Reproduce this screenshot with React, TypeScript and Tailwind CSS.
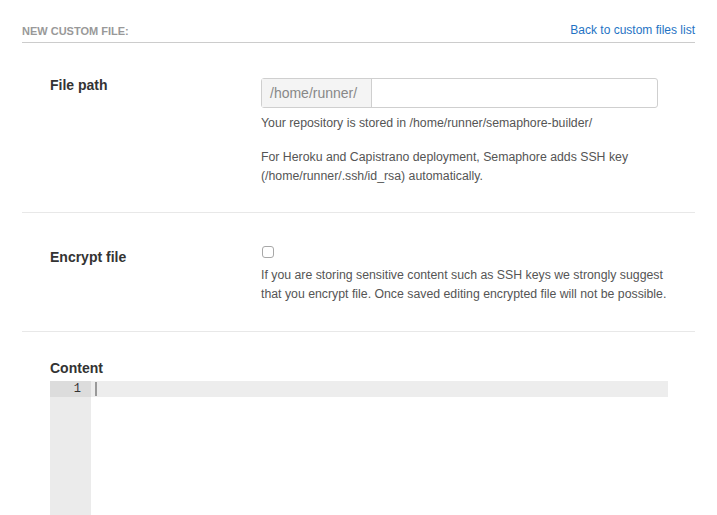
export default function App() {
  return (
    <div className="min-h-[515px] bg-white px-[22px] font-['Liberation_Sans',Arial,sans-serif] text-[#333]">
      <div className="flex items-end justify-between border-b border-[#cccccc] pt-[21px] pb-[3px]">
        <h2 className="text-[11px] font-bold uppercase text-[#999]">
          New custom file:
        </h2>
        <a href="#" className="text-[12px] text-[#1f73c4]">
          Back to custom files list
        </a>
      </div>

      <div className="flex border-b border-[#e8e8e8] pt-[35px] pb-[26px]">
        <label className="-mt-[3px] w-[239px] shrink-0 pl-[28px] text-[14px] font-bold">
          File path
        </label>
        <div className="w-[397px]">
          <div className="flex h-[30px] rounded-[3px] border border-[#cfcfcf]">
            <span className="flex w-[110px] items-center border-r border-[#cfcfcf] bg-[#f4f4f4] pl-[8px] text-[14px] text-[#888]">
              /home/runner/
            </span>
            <input className="flex-1 px-2 text-[13px] outline-none" />
          </div>
          <p className="mt-[6px] text-[12.3px] leading-[18px] text-[#555]">
            Your repository is stored in /home/runner/semaphore-builder/
          </p>
          <p className="mt-[16px] text-[12.3px] leading-[19px] text-[#555]">
            For Heroku and Capistrano deployment, Semaphore adds SSH key
            <br />
            (/home/runner/.ssh/id_rsa) automatically.
          </p>
        </div>
      </div>

      <div className="flex border-b border-[#e8e8e8] pt-[33px] pb-[27px]">
        <label className="w-[239px] shrink-0 pl-[28px] pt-[1px] text-[14px] font-bold">
          Encrypt file
        </label>
        <div className="w-[420px]">
          <input
            type="checkbox"
            className="ml-[1px] block h-[12px] w-[12px] appearance-none rounded-[3px] border border-[#a8a8a8] bg-white"
          />
          <p className="mt-[8px] text-[12.3px] leading-[19px] text-[#555]">
            If you are storing sensitive content such as SSH keys we strongly
            suggest
            <br />
            that you encrypt file. Once saved editing encrypted file will not be
            possible.
          </p>
        </div>
      </div>

      <div className="pt-[28px] pl-[28px] pr-[27px]">
        <label className="block text-[14px] font-bold leading-[16px]">Content</label>
        <div className="mt-[5px] flex h-[134px]">
          <div className="w-[41px] bg-[#ebebeb]">
            <div className="h-[16px] bg-[#dcdcdc] pr-[10px] text-right font-['Liberation_Mono',monospace] text-[12px] leading-[16px] text-[#333]">
              1
            </div>
          </div>
          <div className="flex-1">
            <div className="flex h-[16px] items-center bg-[#ededed] pl-[4px]">
              <span className="h-[14px] w-[1.5px] bg-[#999]" />
            </div>
          </div>
        </div>
      </div>
    </div>
  );
}
